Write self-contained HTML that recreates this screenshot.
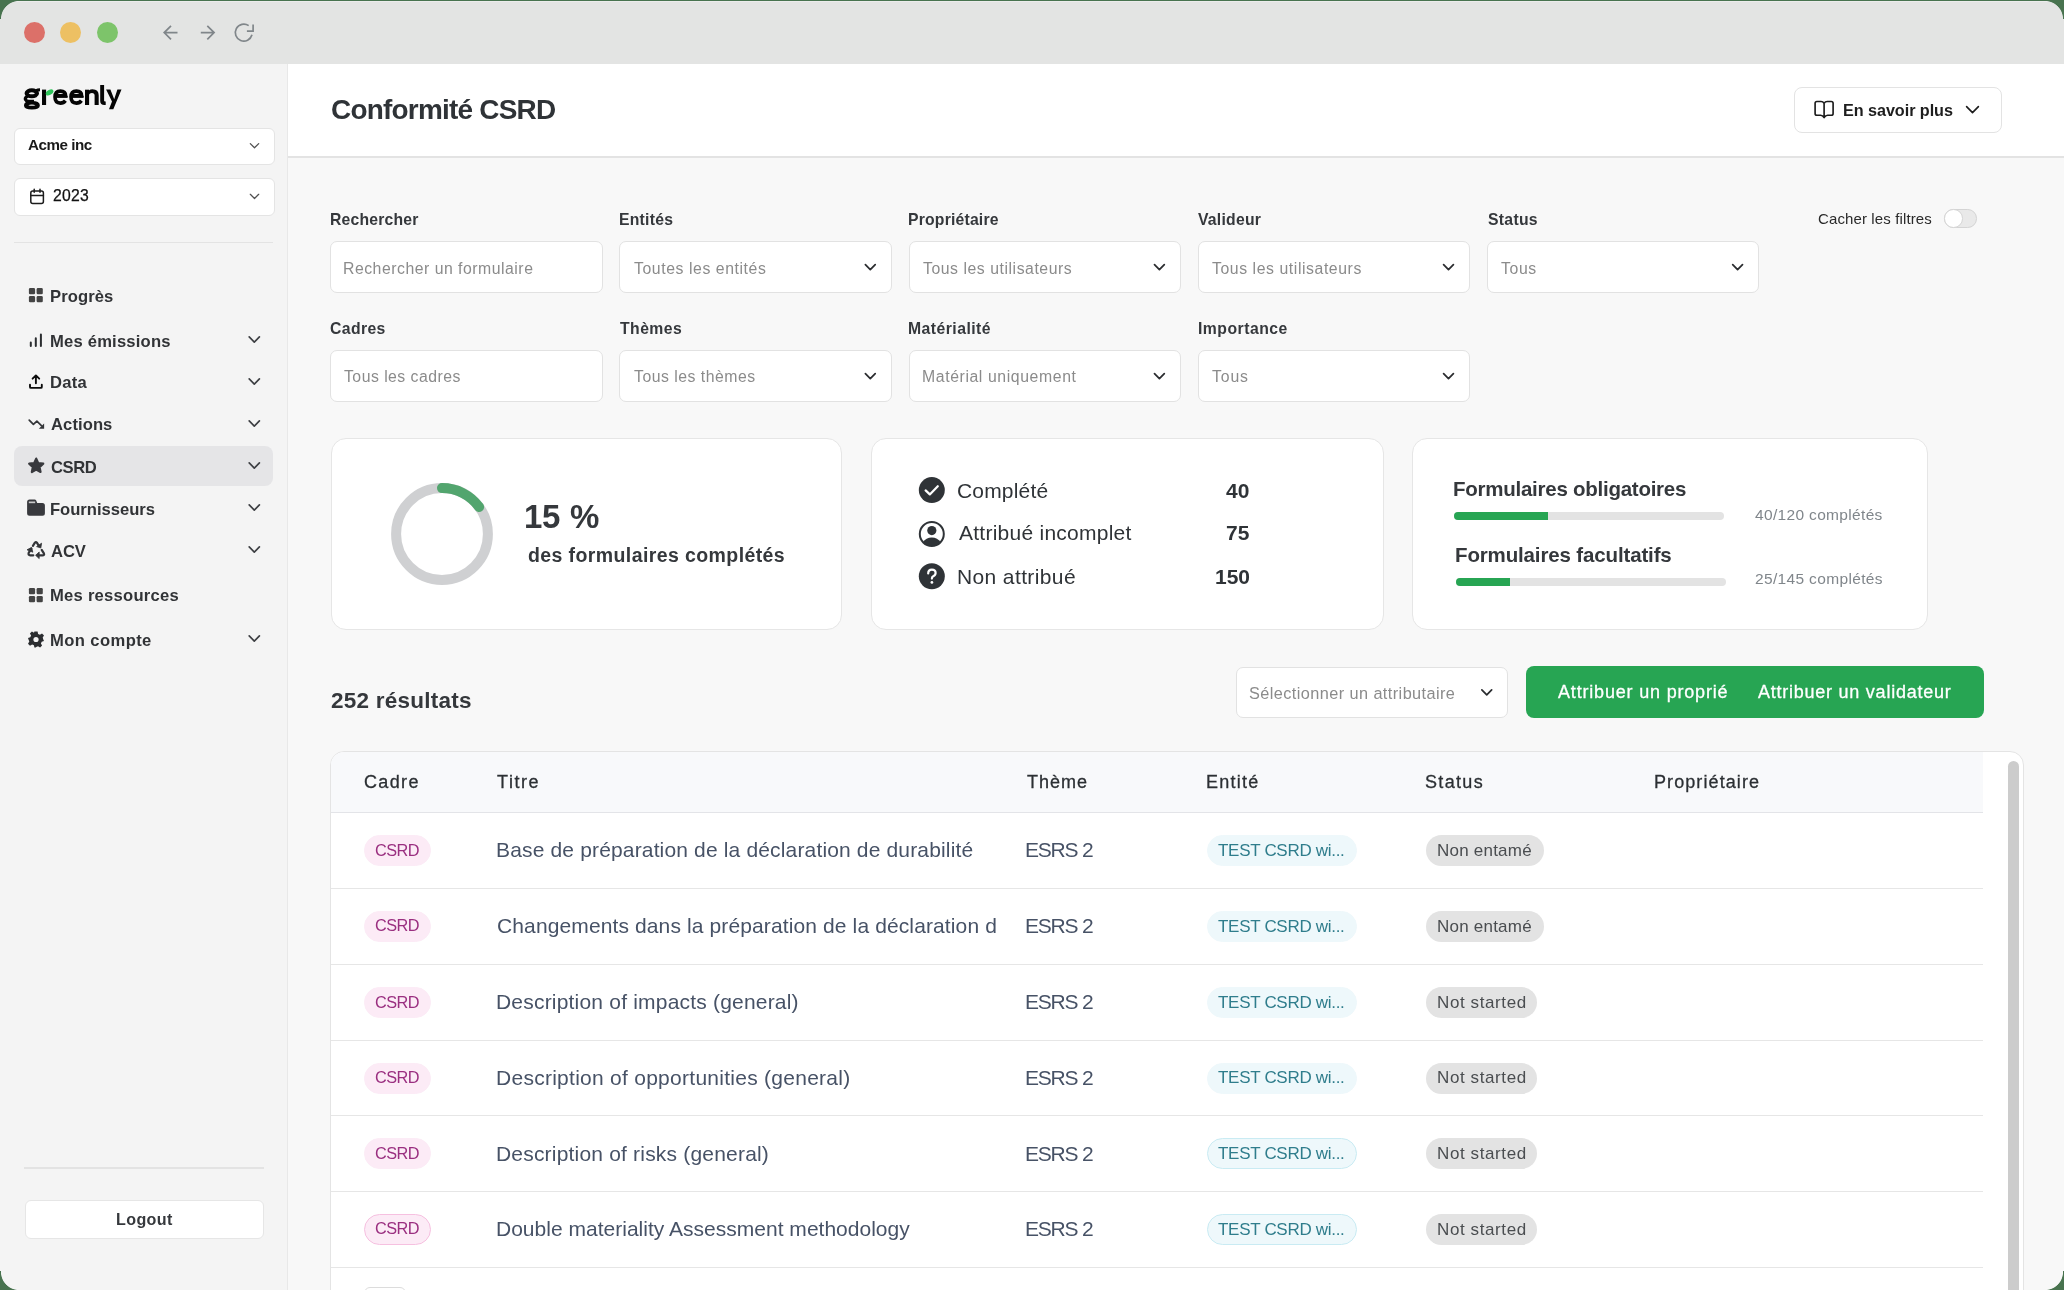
<!DOCTYPE html>
<html><head><meta charset="utf-8"><style>
html,body{margin:0;padding:0;}
body{width:2064px;height:1290px;overflow:hidden;background:#f8f8f8;position:relative;font-family:'Liberation Sans',sans-serif;}
#win{position:absolute;left:0;top:0;width:2064px;height:1290px;}
.a{position:absolute;box-sizing:border-box;}
.t{position:absolute;white-space:nowrap;font-family:'Liberation Sans',sans-serif;will-change:transform;}
svg{position:absolute;overflow:visible;}
.box{position:absolute;box-sizing:border-box;background:#fff;border:1px solid #e2e2e2;}
.chev{position:absolute;}

</style></head><body>
<!-- title bar -->
<div class="a" style="left:0;top:0;width:2064px;height:64px;background:#e3e4e3;"></div>
<div class="a" style="left:0;top:1px;width:2064px;height:1px;background:#ececec;"></div>
<div class="a" style="left:23.5px;top:21.9px;width:21px;height:21px;border-radius:50%;background:#dc7069;"></div>
<div class="a" style="left:60.4px;top:21.9px;width:21px;height:21px;border-radius:50%;background:#edc063;"></div>
<div class="a" style="left:97.1px;top:21.9px;width:21px;height:21px;border-radius:50%;background:#7dc46a;"></div>
<svg width="2064" height="64" style="left:0;top:0" fill="none" stroke="#80868a" stroke-width="1.7" stroke-linecap="butt">
  <path d="M177.5 32.6 H164.5 M171 25.8 L164.2 32.6 L171 39.4"/>
  <path d="M200.8 32.6 H213.8 M207.3 25.8 L214.1 32.6 L207.3 39.4"/>
  <path d="M252.01 34.8 A8.5 8.5 0 1 1 248.68 25.64"/>
  <path d="M253.1 24.6 V31.2 H246.9"/>
</svg>
<!-- sidebar -->
<div class="a" style="left:0;top:64px;width:287px;height:1226px;background:#f4f4f4;"></div>
<div class="a" style="left:287px;top:64px;width:1px;height:1226px;background:#e8e8e8;"></div>
<!-- main header -->
<div class="a" style="left:288px;top:64px;width:1776px;height:92px;background:#fff;"></div>
<div class="a" style="left:288px;top:156px;width:1776px;height:1.5px;background:#e3e3e3;"></div>
<!-- logo -->
<svg width="300" height="130" style="left:0;top:0">
 <g fill="none" stroke="#050505" stroke-linecap="butt">
  <ellipse cx="31.8" cy="93.3" rx="5.2" ry="3.0" stroke-width="4.1"/>
  <ellipse cx="31.9" cy="105.2" rx="6.1" ry="2.45" stroke-width="3.7"/>
  <path d="M27.6 96.2 Q23.6 98.6 26.4 100.6 Q27.8 101.4 31 101.4 H34" stroke-width="3.3"/>
  <path d="M36.4 90.6 Q37.6 89.8 40 89.8" stroke-width="3.0"/>
  <path d="M60.3 101.4 H60.3" stroke-width="0"/>
 </g>
 <rect x="42" y="89.6" width="4.1" height="15.4" fill="#050505"/>
 <ellipse cx="49.6" cy="92.4" rx="4.2" ry="2.4" transform="rotate(-32 49.6 92.4)" fill="#2ec55a"/>
 <g fill="none" stroke="#050505" stroke-width="3.6">
  <path d="M55.2 95.9 H65.6 Q65.6 91.1 60.4 91.1 Q55 91.1 55 97.1 Q55 103.1 60.4 103.1 Q63.6 103.1 65.4 100.6"/>
  <path d="M71.2 95.9 H81.6 Q81.6 91.1 76.4 91.1 Q71 91.1 71 97.1 Q71 103.1 76.4 103.1 Q79.6 103.1 81.4 100.6"/>
 </g>
 <path d="M55 95.8 V97.6 H67.6 V95.8 Z" fill="#050505"/>
 <path d="M71 95.8 V97.6 H83.6 V95.8 Z" fill="#050505"/>
 <rect x="85" y="89.7" width="4.1" height="15.3" fill="#050505"/>
 <path d="M87 94 Q88 89.2 92.5 89.2 Q98.7 89.2 98.7 95.2 V105 H94.6 V95.6 Q94.6 93 92 93 Q89 93 88.5 96 Z" fill="#050505"/>
 <path d="M100.2 85 H104.1 V100.8 Q104.1 101.6 105.7 101.4 V105 Q100.2 105.6 100.2 101 Z" fill="#050505"/>
 <path d="M106.1 89.6 H110.4 L114.2 99.2 L117.4 89.6 H121.5 L113.3 109.3 H109 L112 101.6 Z" fill="#050505"/>
</svg>

<!-- sidebar selects -->
<div class="box" style="left:13.5px;top:127.8px;width:261px;height:37.5px;border-radius:6px;border-color:#e4e4e4"></div>
<div class="box" style="left:13.5px;top:178.2px;width:261px;height:37.5px;border-radius:6px;border-color:#e4e4e4"></div>
<svg width="300" height="300" style="left:0;top:0" fill="none" stroke="#505050" stroke-width="1.25" stroke-linecap="round" stroke-linejoin="round">
  <path d="M250.3 143.6 L254.5 147.8 L258.7 143.6"/>
  <path d="M250.3 194.3 L254.5 198.5 L258.7 194.3"/>
</svg>
<svg width="300" height="300" style="left:0;top:0" fill="none" stroke="#1c1c1c" stroke-width="1.5" stroke-linecap="round" stroke-linejoin="round">
  <rect x="30.8" y="191" width="12.6" height="12.4" rx="2"/>
  <path d="M30.8 195.6 H43.4 M34.2 189.2 V192.2 M40 189.2 V192.2"/>
</svg>
<div class="a" style="left:14px;top:241.5px;width:259px;height:1.5px;background:#e3e3e3;"></div>
<!-- CSRD highlight -->
<div class="a" style="left:14.3px;top:445.6px;width:259px;height:40px;border-radius:8px;background:#e5e5e7;"></div>
<!-- nav icons -->
<svg width="300" height="700" style="left:0;top:0" fill="#444">
  <rect x="28.9" y="288.1" width="6.2" height="6.2" rx="1.3"/><rect x="36.6" y="288.1" width="6.2" height="6.2" rx="1.3"/>
  <rect x="28.9" y="296.1" width="6.2" height="6.2" rx="1.3"/><rect x="36.6" y="296.1" width="6.2" height="6.2" rx="1.3"/>
  <rect x="28.9" y="588" width="6.2" height="6.2" rx="1.3"/><rect x="36.6" y="588" width="6.2" height="6.2" rx="1.3"/>
  <rect x="28.9" y="596" width="6.2" height="6.2" rx="1.3"/><rect x="36.6" y="596" width="6.2" height="6.2" rx="1.3"/>
</svg>
<svg width="300" height="700" style="left:0;top:0" fill="none" stroke="#2b2d30" stroke-width="2" stroke-linecap="round" stroke-linejoin="round">
  <path d="M30.8 346 V342.6 M35.8 346 V338.2 M40.9 346 V334.4"/>
  <path d="M30 384.8 V387 Q30 387.9 30.9 387.9 H40.9 Q41.8 387.9 41.8 387 V384.8 M35.9 383.2 V375.8 M32.6 378.7 L35.9 375.4 L39.2 378.7" stroke="#0c0c0c" stroke-width="1.9"/>
  <path d="M29.2 420.1 L33.4 424.4 L36.9 421.1 L41.4 425.6" stroke-width="1.7" stroke="#333538"/><path d="M44.1 423.4 V428.7 H38.8 Z" fill="#333538" stroke="none"/>
</svg>
<svg width="300" height="700" style="left:0;top:0" fill="#2b2d30">
  <path d="M36.20 458.60 L38.26 463.17 L43.24 463.71 L39.53 467.08 L40.55 471.99 L36.20 469.50 L31.85 471.99 L32.87 467.08 L29.16 463.71 L34.14 463.17 Z" fill="#38393d" stroke="#38393d" stroke-width="2.2" stroke-linejoin="round"/>
  <path d="M27.1 502 Q27.1 499.5 29.6 499.5 H34.6 Q35.7 499.5 36.2 500.6 L37.2 503 H42.4 Q44.9 503 44.9 505.5 V513.2 Q44.9 515.7 42.4 515.7 H29.6 Q27.1 515.7 27.1 513.2 Z" fill="#38393d"/><rect x="28.8" y="501.5" width="6.4" height="1.7" fill="#c9c9ca"/>
  <!-- gear -->
  <g transform="translate(36 639.5)">
    <path d="M-1.6 -8 H1.6 L2.1 -5.6 L3.9 -4.7 L6 -6 L8 -4 L6.7 -1.9 L7.3 0 L8 1.6 V1.6 L5.7 2.2 L4.9 4 L6.1 6.1 L4.1 8.1 L2 6.8 L0.2 7.5 L-0.3 8 H-1.6 L-2.1 5.7 L-3.9 4.9 L-6 6.2 L-8 4.2 L-6.7 2.1 L-7.4 0.3 L-8 -1.6 L-5.7 -2.2 L-4.9 -4 L-6.1 -6.1 L-4.1 -8.1 L-2 -6.8 Z"/>
    <circle cx="0" cy="0" r="2.6" fill="#f4f4f4"/>
  </g>
</svg>
<!-- recycle icon ACV -->
<svg width="300" height="700" style="left:0;top:0" fill="none" stroke="#333538" stroke-width="2.2" stroke-linecap="round" stroke-linejoin="round">
  <path d="M32.9 545.8 L34.9 542.7 Q35.9 541.5 36.9 542.7 L38.2 544.8"/>
  <path d="M31.3 548.6 L28.7 552.9 Q27.9 555.3 30.3 555.3 H33.3"/>
  <path d="M41.7 549.9 L43.9 553.4 Q44.8 555.3 42.4 555.3 H37.6"/>
</svg>
<svg width="300" height="700" style="left:0;top:0" fill="#333538" stroke="#333538" stroke-width="0.8" stroke-linejoin="round">
  <path d="M41.6 543.2 L40.8 548 L36.6 546.6 Z"/>
  <path d="M27 549.8 L31.6 547.4 L32.8 552.2 Z"/>
  <path d="M39.2 552 L35.6 555.3 L39.2 558.6 Z"/>
</svg>
<!-- nav chevrons -->
<svg width="300" height="700" style="left:0;top:0" fill="none" stroke="#3c3e42" stroke-width="1.65" stroke-linecap="round" stroke-linejoin="round">
  <path d="M249.2 336.9 L254.3 342.1 L259.4 336.9"/>
  <path d="M249.2 378.9 L254.3 384.1 L259.4 378.9"/>
  <path d="M249.2 420.9 L254.3 426.1 L259.4 420.9"/>
  <path d="M249.2 462.9 L254.3 468.1 L259.4 462.9"/>
  <path d="M249.2 504.9 L254.3 510.1 L259.4 504.9"/>
  <path d="M249.2 546.9 L254.3 552.1 L259.4 546.9"/>
  <path d="M249.2 635.9 L254.3 641.1 L259.4 635.9"/>
</svg>
<!-- logout -->
<div class="a" style="left:24px;top:1167px;width:240px;height:1.5px;background:#e3e3e3;"></div>
<div class="box" style="left:24.5px;top:1200px;width:239px;height:38.5px;border-radius:6px;border-color:#e6e6e6"></div>
<!-- en savoir plus -->
<div class="box" style="left:1793.9px;top:87.0px;width:208px;height:45.8px;border-radius:8px;border-color:#e3e3e3"></div>
<svg width="2064" height="200" style="left:0;top:0" fill="none" stroke="#1c1c1c" stroke-width="1.6" stroke-linecap="round" stroke-linejoin="round">
  <path d="M1824.1 103.4 Q1823 101.5 1821 101.5 H1816.9 Q1815.1 101.5 1815.1 103.3 V113.4 Q1815.1 115.2 1816.9 115.2 H1820.6 Q1822.6 115.2 1824.1 117.6 Q1825.6 115.2 1827.6 115.2 H1831.3 Q1833.1 115.2 1833.1 113.4 V103.3 Q1833.1 101.5 1831.3 101.5 H1827.2 Q1825.2 101.5 1824.1 103.4 V117.6" stroke-width="1.65"/>
  <path d="M1966.6 106.6 L1972.5 112.6 L1978.4 106.6"/>
</svg>
<!-- filter boxes -->
<div class="box" style="left:330.3px;top:241.4px;width:272.4px;height:51.8px;border-radius:7px"></div>
<div class="box" style="left:619.4px;top:241.4px;width:272.4px;height:51.8px;border-radius:7px"></div>
<div class="box" style="left:908.5px;top:241.4px;width:272.4px;height:51.8px;border-radius:7px"></div>
<div class="box" style="left:1197.6px;top:241.4px;width:272.4px;height:51.8px;border-radius:7px"></div>
<div class="box" style="left:1486.7px;top:241.4px;width:272.4px;height:51.8px;border-radius:7px"></div>
<div class="box" style="left:330.3px;top:350.4px;width:272.4px;height:51.8px;border-radius:7px"></div>
<div class="box" style="left:619.4px;top:350.4px;width:272.4px;height:51.8px;border-radius:7px"></div>
<div class="box" style="left:908.5px;top:350.4px;width:272.4px;height:51.8px;border-radius:7px"></div>
<div class="box" style="left:1197.6px;top:350.4px;width:272.4px;height:51.8px;border-radius:7px"></div>
<svg width="2064" height="420" style="left:0;top:0" fill="none" stroke="#2a2c2f" stroke-width="1.75" stroke-linecap="round" stroke-linejoin="round">
  <path d="M865.4 264.7 L870.3 269.6 L875.2 264.7"/>
  <path d="M1154.5 264.7 L1159.4 269.6 L1164.3 264.7"/>
  <path d="M1443.6 264.7 L1448.5 269.6 L1453.4 264.7"/>
  <path d="M1732.7 264.7 L1737.6 269.6 L1742.5 264.7"/>
  <path d="M865.4 373.7 L870.3 378.6 L875.2 373.7"/>
  <path d="M1154.5 373.7 L1159.4 378.6 L1164.3 373.7"/>
  <path d="M1443.6 373.7 L1448.5 378.6 L1453.4 373.7"/>
</svg>
<!-- toggle -->
<div class="a" style="left:1944.2px;top:209.3px;width:33px;height:18.5px;border-radius:9.25px;background:#e9e9e9;border:1px solid #d4d4d4"></div>
<div class="a" style="left:1944.2px;top:209.3px;width:18.5px;height:18.5px;border-radius:50%;background:#fff;border:1px solid #d4d4d4"></div>
<!-- cards -->
<div class="box" style="left:330.5px;top:438.3px;width:511.5px;height:191.7px;border-radius:15px;border-color:#e6e6e6"></div>
<div class="box" style="left:870.6px;top:438.3px;width:513.6px;height:191.7px;border-radius:15px;border-color:#e6e6e6"></div>
<div class="box" style="left:1412px;top:438.3px;width:515.8px;height:191.7px;border-radius:15px;border-color:#e6e6e6"></div>
<svg width="2064" height="700" style="left:0;top:0" fill="none">
  <circle cx="442" cy="534" r="45.9" stroke="#cfd0d2" stroke-width="10"/>
  <path d="M 442 488.1 A 45.9 45.9 0 0 1 479.1 507" stroke="#52a56e" stroke-width="10" stroke-linecap="round"/>
</svg>
<!-- card 2 icons -->
<svg width="2064" height="700" style="left:0;top:0">
  <circle cx="931.8" cy="490.1" r="13" fill="#2f3337"/>
  <path d="M925.6 490.4 L929.8 494.4 L937.8 486.2" fill="none" stroke="#fff" stroke-width="2.2" stroke-linecap="round" stroke-linejoin="round"/>
  <circle cx="931.8" cy="534" r="12" fill="none" stroke="#2f3337" stroke-width="2"/>
  <circle cx="931.8" cy="530.6" r="4.6" fill="#2f3337"/>
  <path d="M922.9 542.2 Q926 537.4 931.8 537.4 Q937.6 537.4 940.7 542.2 Q937 546 931.8 546 Q926.6 546 922.9 542.2 Z" fill="#2f3337"/>
  <circle cx="931.8" cy="576.2" r="13" fill="#2f3337"/>
  <path d="M928.2 573.4 Q928.2 569.6 931.9 569.6 Q935.6 569.6 935.6 573 Q935.6 575.2 933.2 576.2 Q931.9 576.8 931.9 578.6" fill="none" stroke="#fff" stroke-width="2.2" stroke-linecap="round"/>
  <circle cx="931.9" cy="582.4" r="1.4" fill="#fff"/>
</svg>
<!-- progress bars -->
<div class="a" style="left:1454px;top:512.4px;width:270.3px;height:7.7px;border-radius:4px;background:#e3e3e3;"></div>
<div class="a" style="left:1454px;top:512.4px;width:94px;height:7.7px;border-radius:4px 0 0 4px;background:#27a553;"></div>
<div class="a" style="left:1455.7px;top:578.3px;width:270.3px;height:8px;border-radius:4px;background:#e3e3e3;"></div>
<div class="a" style="left:1455.7px;top:578.3px;width:54.3px;height:8px;border-radius:4px 0 0 4px;background:#27a553;"></div>
<!-- select attributaire + green button -->
<div class="box" style="left:1236.4px;top:666.7px;width:272.1px;height:51.7px;border-radius:7px"></div>
<svg width="2064" height="800" style="left:0;top:0" fill="none" stroke="#2a2c2f" stroke-width="1.75" stroke-linecap="round" stroke-linejoin="round">
  <path d="M1481.85 689.9 L1486.75 694.8 L1491.65 689.9"/>
</svg>
<div class="a" style="left:1526.1px;top:666.4px;width:458px;height:51.2px;border-radius:8px;background:#27a553;"></div>
<!-- table -->
<div class="a" style="left:330.3px;top:751.2px;width:1693.3px;height:600px;border-radius:14px;background:#fff;border:1px solid #e4e4e4;"></div>
<div class="a" style="left:331.3px;top:752.2px;width:1651.7px;height:60px;border-radius:13px 0 0 0;background:#f8f9fb;"></div>
<div class="a" style="left:331.3px;top:812px;width:1651.7px;height:1px;background:#e3e4e8;"></div>
<div class="a" style="left:331.3px;top:888px;width:1651.7px;height:1px;background:#e6e6e6;"></div>
<div class="a" style="left:331.3px;top:964px;width:1651.7px;height:1px;background:#e6e6e6;"></div>
<div class="a" style="left:331.3px;top:1040px;width:1651.7px;height:1px;background:#e6e6e6;"></div>
<div class="a" style="left:331.3px;top:1115px;width:1651.7px;height:1px;background:#e6e6e6;"></div>
<div class="a" style="left:331.3px;top:1191px;width:1651.7px;height:1px;background:#e6e6e6;"></div>
<div class="a" style="left:331.3px;top:1267px;width:1651.7px;height:1px;background:#e6e6e6;"></div>
<div class="a" style="left:2008px;top:760.9px;width:11px;height:600px;border-radius:5.5px;background:#cccccc;"></div>
<div class="a" style="left:364.2px;top:1286.9px;width:41.7px;height:30px;border-radius:6px;border:1px solid #dcdcdc;background:#fff"></div>
<!-- badges -->
<div class="a" style="left:364.2px;top:835.30px;width:66.8px;height:31.2px;border-radius:16px;background:#fcebf6;border:1px solid #fcebf6;"></div>
<div class="a" style="left:1206.6px;top:835.30px;width:150px;height:31.2px;border-radius:16px;background:#eef8fb;border:1px solid #eef8fb;"></div>
<div class="a" style="left:1426px;top:835.30px;width:117.8px;height:31.2px;border-radius:16px;background:#e3e3e3;"></div>
<div class="a" style="left:364.2px;top:911.05px;width:66.8px;height:31.2px;border-radius:16px;background:#fcebf6;border:1px solid #fcebf6;"></div>
<div class="a" style="left:1206.6px;top:911.05px;width:150px;height:31.2px;border-radius:16px;background:#eef8fb;border:1px solid #eef8fb;"></div>
<div class="a" style="left:1426px;top:911.05px;width:117.8px;height:31.2px;border-radius:16px;background:#e3e3e3;"></div>
<div class="a" style="left:364.2px;top:986.80px;width:66.8px;height:31.2px;border-radius:16px;background:#fcebf6;border:1px solid #fcebf6;"></div>
<div class="a" style="left:1206.6px;top:986.80px;width:150px;height:31.2px;border-radius:16px;background:#eef8fb;border:1px solid #eef8fb;"></div>
<div class="a" style="left:1426px;top:986.80px;width:111px;height:31.2px;border-radius:16px;background:#e3e3e3;"></div>
<div class="a" style="left:364.2px;top:1062.55px;width:66.8px;height:31.2px;border-radius:16px;background:#fcebf6;border:1px solid #fcebf6;"></div>
<div class="a" style="left:1206.6px;top:1062.55px;width:150px;height:31.2px;border-radius:16px;background:#eef8fb;border:1px solid #eef8fb;"></div>
<div class="a" style="left:1426px;top:1062.55px;width:111px;height:31.2px;border-radius:16px;background:#e3e3e3;"></div>
<div class="a" style="left:364.2px;top:1138.30px;width:66.8px;height:31.2px;border-radius:16px;background:#fcebf6;border:1px solid #fcebf6;"></div>
<div class="a" style="left:1206.6px;top:1138.30px;width:150px;height:31.2px;border-radius:16px;background:#eef8fb;border:1px solid #c9ebf3;"></div>
<div class="a" style="left:1426px;top:1138.30px;width:111px;height:31.2px;border-radius:16px;background:#e3e3e3;"></div>
<div class="a" style="left:364.2px;top:1214.05px;width:66.8px;height:31.2px;border-radius:16px;background:#fcebf6;border:1px solid #f6c0e0;"></div>
<div class="a" style="left:1206.6px;top:1214.05px;width:150px;height:31.2px;border-radius:16px;background:#eef8fb;border:1px solid #c9ebf3;"></div>
<div class="a" style="left:1426px;top:1214.05px;width:111px;height:31.2px;border-radius:16px;background:#e3e3e3;"></div>
<!-- window corners -->
<div class="a" style="left:0;top:0;width:2064px;height:1px;background:#48734f;z-index:10"></div>
<div class="a" style="left:0;top:0;width:19px;height:19px;background:radial-gradient(circle at 19px 19px, rgba(0,0,0,0) 17.6px, #48734f 18.4px);z-index:10"></div>
<div class="a" style="right:0;top:0;width:19px;height:19px;background:radial-gradient(circle at 0px 19px, rgba(0,0,0,0) 17.6px, #48734f 18.4px);z-index:10"></div>
<div class="a" style="left:0;bottom:0;width:19px;height:19px;background:radial-gradient(circle at 19px 1px, rgba(0,0,0,0) 17.6px, #48734f 18.4px);z-index:10"></div>
<div class="a" style="right:0;bottom:0;width:19px;height:19px;background:radial-gradient(circle at 0px 1px, rgba(0,0,0,0) 17.6px, #48734f 18.4px);z-index:10"></div>

<div class="t" id="t0" style="left:28.30px;top:137.08px;font-size:15.2px;line-height:15.2px;font-weight:700;color:#1a1a1a;letter-spacing:-0.481px;">Acme inc</div>
<div class="t" id="t1" style="left:53.27px;top:187.81px;font-size:15.75px;line-height:15.75px;font-weight:400;color:#111111;-webkit-text-stroke:0.25px #111111;letter-spacing:0.258px;">2023</div>
<div class="t" id="t2" style="left:50.19px;top:289.39px;font-size:16.6px;line-height:16.6px;font-weight:700;color:#313336;letter-spacing:0.082px;">Progrès</div>
<div class="t" id="t3" style="left:50.19px;top:333.59px;font-size:16.6px;line-height:16.6px;font-weight:700;color:#313336;letter-spacing:0.205px;">Mes émissions</div>
<div class="t" id="t4" style="left:50.19px;top:375.39px;font-size:16.6px;line-height:16.6px;font-weight:700;color:#313336;letter-spacing:0.228px;">Data</div>
<div class="t" id="t5" style="left:51.35px;top:417.39px;font-size:16.6px;line-height:16.6px;font-weight:700;color:#313336;letter-spacing:0.082px;">Actions</div>
<div class="t" id="t6" style="left:50.66px;top:459.89px;font-size:16.6px;line-height:16.6px;font-weight:700;color:#313336;letter-spacing:-0.405px;">CSRD</div>
<div class="t" id="t7" style="left:50.19px;top:501.89px;font-size:16.6px;line-height:16.6px;font-weight:700;color:#313336;letter-spacing:-0.016px;">Fournisseurs</div>
<div class="t" id="t8" style="left:51.35px;top:543.89px;font-size:16.6px;line-height:16.6px;font-weight:700;color:#313336;letter-spacing:-0.058px;">ACV</div>
<div class="t" id="t9" style="left:50.19px;top:588.39px;font-size:16.6px;line-height:16.6px;font-weight:700;color:#313336;letter-spacing:0.253px;">Mes ressources</div>
<div class="t" id="t10" style="left:50.19px;top:633.39px;font-size:16.6px;line-height:16.6px;font-weight:700;color:#313336;letter-spacing:0.402px;">Mon compte</div>
<div class="t" id="t11" style="left:115.86px;top:1210.56px;font-size:16.1px;line-height:16.1px;font-weight:700;color:#35383c;letter-spacing:0.373px;">Logout</div>
<div class="t" id="t12" style="left:330.71px;top:95.74px;font-size:27.95px;line-height:27.95px;font-weight:700;color:#2f3337;letter-spacing:-0.772px;">Conformité CSRD</div>
<div class="t" id="t13" style="left:1843.05px;top:102.08px;font-size:16.2px;line-height:16.2px;font-weight:700;color:#1e1e1e;letter-spacing:-0.056px;">En savoir plus</div>
<div class="t" id="t14" style="left:330.17px;top:211.86px;font-size:15.75px;line-height:15.75px;font-weight:700;color:#35383c;letter-spacing:0.188px;">Rechercher</div>
<div class="t" id="t15" style="left:619.32px;top:211.86px;font-size:15.75px;line-height:15.75px;font-weight:700;color:#35383c;letter-spacing:0.237px;">Entités</div>
<div class="t" id="t16" style="left:908.32px;top:211.86px;font-size:15.75px;line-height:15.75px;font-weight:700;color:#35383c;letter-spacing:0.190px;">Propriétaire</div>
<div class="t" id="t17" style="left:1197.88px;top:211.86px;font-size:15.75px;line-height:15.75px;font-weight:700;color:#35383c;letter-spacing:0.228px;">Valideur</div>
<div class="t" id="t18" style="left:1487.62px;top:211.86px;font-size:15.75px;line-height:15.75px;font-weight:700;color:#35383c;letter-spacing:0.295px;">Status</div>
<div class="t" id="t19" style="left:330.20px;top:321.11px;font-size:15.75px;line-height:15.75px;font-weight:700;color:#35383c;letter-spacing:0.391px;">Cadres</div>
<div class="t" id="t20" style="left:619.79px;top:321.11px;font-size:15.75px;line-height:15.75px;font-weight:700;color:#35383c;letter-spacing:0.450px;">Thèmes</div>
<div class="t" id="t21" style="left:908.32px;top:321.11px;font-size:15.75px;line-height:15.75px;font-weight:700;color:#35383c;letter-spacing:0.461px;">Matérialité</div>
<div class="t" id="t22" style="left:1197.80px;top:321.11px;font-size:15.75px;line-height:15.75px;font-weight:700;color:#35383c;letter-spacing:0.492px;">Importance</div>
<div class="t" id="t23" style="left:342.80px;top:260.57px;font-size:15.8px;line-height:15.8px;font-weight:400;color:#8b8b8b;letter-spacing:0.508px;">Rechercher un formulaire</div>
<div class="t" id="t24" style="left:633.56px;top:260.57px;font-size:15.8px;line-height:15.8px;font-weight:400;color:#8b8b8b;letter-spacing:0.574px;">Toutes les entités</div>
<div class="t" id="t25" style="left:922.56px;top:260.57px;font-size:15.8px;line-height:15.8px;font-weight:400;color:#8b8b8b;letter-spacing:0.542px;">Tous les utilisateurs</div>
<div class="t" id="t26" style="left:1211.56px;top:260.57px;font-size:15.8px;line-height:15.8px;font-weight:400;color:#8b8b8b;letter-spacing:0.572px;">Tous les utilisateurs</div>
<div class="t" id="t27" style="left:1501.06px;top:260.57px;font-size:15.8px;line-height:15.8px;font-weight:400;color:#8b8b8b;letter-spacing:0.624px;">Tous</div>
<div class="t" id="t28" style="left:343.56px;top:368.57px;font-size:15.8px;line-height:15.8px;font-weight:400;color:#8b8b8b;letter-spacing:0.474px;">Tous les cadres</div>
<div class="t" id="t29" style="left:633.56px;top:368.57px;font-size:15.8px;line-height:15.8px;font-weight:400;color:#8b8b8b;letter-spacing:0.502px;">Tous les thèmes</div>
<div class="t" id="t30" style="left:921.80px;top:368.57px;font-size:15.8px;line-height:15.8px;font-weight:400;color:#8b8b8b;letter-spacing:0.600px;">Matérial uniquement</div>
<div class="t" id="t31" style="left:1211.56px;top:368.57px;font-size:15.8px;line-height:15.8px;font-weight:400;color:#8b8b8b;letter-spacing:0.878px;">Tous</div>
<div class="t" id="t32" style="left:1817.75px;top:210.75px;font-size:15.0px;line-height:15.0px;font-weight:400;color:#2a2a2a;letter-spacing:0.120px;">Cacher les filtres</div>
<div class="t" id="t33" style="left:523.64px;top:500.15px;font-size:33px;line-height:33px;font-weight:700;color:#35383c;letter-spacing:-0.475px;">15</div>
<div class="t" id="t34" style="left:570.02px;top:500.15px;font-size:33px;line-height:33px;font-weight:700;color:#35383c;letter-spacing:0.000px;">%</div>
<div class="t" id="t35" style="left:527.52px;top:545.93px;font-size:19.5px;line-height:19.5px;font-weight:700;color:#35383c;letter-spacing:0.401px;">des formulaires complétés</div>
<div class="t" id="t36" style="left:957.41px;top:479.95px;font-size:21.0px;line-height:21.0px;font-weight:400;color:#2f3337;letter-spacing:0.169px;">Complété</div>
<div class="t" id="t37" style="left:958.84px;top:522.15px;font-size:21.0px;line-height:21.0px;font-weight:400;color:#2f3337;letter-spacing:0.253px;">Attribué incomplet</div>
<div class="t" id="t38" style="left:957.05px;top:566.15px;font-size:21.0px;line-height:21.0px;font-weight:400;color:#2f3337;letter-spacing:0.378px;">Non attribué</div>
<div class="t" id="t39" style="right:814.38px;top:479.95px;font-size:21.0px;line-height:21.0px;font-weight:700;color:#2f3337;letter-spacing:0.000px;">40</div>
<div class="t" id="t40" style="right:814.41px;top:522.15px;font-size:21.0px;line-height:21.0px;font-weight:700;color:#2f3337;letter-spacing:0.000px;">75</div>
<div class="t" id="t41" style="right:814.34px;top:566.15px;font-size:21.0px;line-height:21.0px;font-weight:700;color:#2f3337;letter-spacing:0.000px;">150</div>
<div class="t" id="t42" style="left:1453.42px;top:479.37px;font-size:20.5px;line-height:20.5px;font-weight:700;color:#35383c;letter-spacing:-0.255px;">Formulaires obligatoires</div>
<div class="t" id="t43" style="left:1754.88px;top:507.08px;font-size:15.5px;line-height:15.5px;font-weight:400;color:#80868b;letter-spacing:0.334px;">40/120 complétés</div>
<div class="t" id="t44" style="left:1454.72px;top:545.38px;font-size:20.5px;line-height:20.5px;font-weight:700;color:#35383c;letter-spacing:-0.143px;">Formulaires facultatifs</div>
<div class="t" id="t45" style="left:1754.95px;top:571.08px;font-size:15.5px;line-height:15.5px;font-weight:400;color:#80868b;letter-spacing:0.342px;">25/145 complétés</div>
<div class="t" id="t46" style="left:330.73px;top:690.37px;font-size:22.5px;line-height:22.5px;font-weight:700;color:#35383c;letter-spacing:0.238px;">252 résultats</div>
<div class="t" id="t47" style="left:1248.84px;top:685.14px;font-size:16.3px;line-height:16.3px;font-weight:400;color:#8b8b8b;letter-spacing:0.420px;">Sélectionner un attributaire</div>
<div class="t" id="t48" style="left:1557.97px;top:683.05px;font-size:18px;line-height:18px;font-weight:400;color:#ffffff;-webkit-text-stroke:0.29px #ffffff;letter-spacing:0.814px;">Attribuer un proprié</div>
<div class="t" id="t49" style="left:1757.87px;top:683.05px;font-size:18px;line-height:18px;font-weight:400;color:#ffffff;-webkit-text-stroke:0.29px #ffffff;letter-spacing:0.755px;">Attribuer un validateur</div>
<div class="t" id="t50" style="left:363.79px;top:773.10px;font-size:18px;line-height:18px;font-weight:400;color:#2b2f33;-webkit-text-stroke:0.29px #2b2f33;letter-spacing:1.360px;">Cadre</div>
<div class="t" id="t51" style="left:496.90px;top:773.10px;font-size:18px;line-height:18px;font-weight:400;color:#2b2f33;-webkit-text-stroke:0.29px #2b2f33;letter-spacing:1.556px;">Titre</div>
<div class="t" id="t52" style="left:1026.90px;top:773.10px;font-size:18px;line-height:18px;font-weight:400;color:#2b2f33;-webkit-text-stroke:0.29px #2b2f33;letter-spacing:0.996px;">Thème</div>
<div class="t" id="t53" style="left:1206.18px;top:773.10px;font-size:18px;line-height:18px;font-weight:400;color:#2b2f33;-webkit-text-stroke:0.29px #2b2f33;letter-spacing:1.264px;">Entité</div>
<div class="t" id="t54" style="left:1425.37px;top:773.10px;font-size:18px;line-height:18px;font-weight:400;color:#2b2f33;-webkit-text-stroke:0.29px #2b2f33;letter-spacing:1.335px;">Status</div>
<div class="t" id="t55" style="left:1653.68px;top:773.10px;font-size:18px;line-height:18px;font-weight:400;color:#2b2f33;-webkit-text-stroke:0.29px #2b2f33;letter-spacing:1.086px;">Propriétaire</div>
<div class="t" id="t56" style="left:496.30px;top:839.45px;font-size:21.0px;line-height:21.0px;font-weight:400;color:#475266;letter-spacing:0.157px;">Base de préparation de la déclaration de durabilité</div>
<div class="t" id="t57" style="left:1025.35px;top:839.45px;font-size:21.0px;line-height:21.0px;font-weight:400;color:#475266;letter-spacing:-1.224px;">ESRS 2</div>
<div class="t" id="t58" style="left:374.62px;top:841.50px;font-size:16.3px;line-height:16.3px;font-weight:400;color:#9a2f80;letter-spacing:-0.523px;">CSRD</div>
<div class="t" id="t59" style="left:1218.43px;top:841.90px;font-size:17.0px;line-height:17.0px;font-weight:400;color:#2f7d8c;letter-spacing:-0.297px;">TEST CSRD wi...</div>
<div class="t" id="t60" style="left:1437.11px;top:841.90px;font-size:17.0px;line-height:17.0px;font-weight:400;color:#4a4d50;letter-spacing:0.223px;">Non entamé</div>
<div class="t" id="t61" style="left:496.66px;top:915.45px;font-size:21.0px;line-height:21.0px;font-weight:400;color:#475266;letter-spacing:0.120px;">Changements dans la préparation de la déclaration d</div>
<div class="t" id="t62" style="left:1025.35px;top:915.45px;font-size:21.0px;line-height:21.0px;font-weight:400;color:#475266;letter-spacing:-1.224px;">ESRS 2</div>
<div class="t" id="t63" style="left:374.62px;top:917.49px;font-size:16.3px;line-height:16.3px;font-weight:400;color:#9a2f80;letter-spacing:-0.523px;">CSRD</div>
<div class="t" id="t64" style="left:1218.43px;top:917.90px;font-size:17.0px;line-height:17.0px;font-weight:400;color:#2f7d8c;letter-spacing:-0.297px;">TEST CSRD wi...</div>
<div class="t" id="t65" style="left:1437.11px;top:917.90px;font-size:17.0px;line-height:17.0px;font-weight:400;color:#4a4d50;letter-spacing:0.223px;">Non entamé</div>
<div class="t" id="t66" style="left:496.30px;top:991.45px;font-size:21.0px;line-height:21.0px;font-weight:400;color:#475266;letter-spacing:0.198px;">Description of impacts (general)</div>
<div class="t" id="t67" style="left:1025.35px;top:991.45px;font-size:21.0px;line-height:21.0px;font-weight:400;color:#475266;letter-spacing:-1.224px;">ESRS 2</div>
<div class="t" id="t68" style="left:374.62px;top:993.50px;font-size:16.3px;line-height:16.3px;font-weight:400;color:#9a2f80;letter-spacing:-0.523px;">CSRD</div>
<div class="t" id="t69" style="left:1218.43px;top:993.90px;font-size:17.0px;line-height:17.0px;font-weight:400;color:#2f7d8c;letter-spacing:-0.297px;">TEST CSRD wi...</div>
<div class="t" id="t70" style="left:1437.11px;top:993.90px;font-size:17.0px;line-height:17.0px;font-weight:400;color:#4a4d50;letter-spacing:0.607px;">Not started</div>
<div class="t" id="t71" style="left:496.30px;top:1067.45px;font-size:21.0px;line-height:21.0px;font-weight:400;color:#475266;letter-spacing:0.267px;">Description of opportunities (general)</div>
<div class="t" id="t72" style="left:1025.35px;top:1067.45px;font-size:21.0px;line-height:21.0px;font-weight:400;color:#475266;letter-spacing:-1.224px;">ESRS 2</div>
<div class="t" id="t73" style="left:374.62px;top:1069.49px;font-size:16.3px;line-height:16.3px;font-weight:400;color:#9a2f80;letter-spacing:-0.523px;">CSRD</div>
<div class="t" id="t74" style="left:1218.43px;top:1068.90px;font-size:17.0px;line-height:17.0px;font-weight:400;color:#2f7d8c;letter-spacing:-0.297px;">TEST CSRD wi...</div>
<div class="t" id="t75" style="left:1437.11px;top:1068.90px;font-size:17.0px;line-height:17.0px;font-weight:400;color:#4a4d50;letter-spacing:0.607px;">Not started</div>
<div class="t" id="t76" style="left:496.30px;top:1143.45px;font-size:21.0px;line-height:21.0px;font-weight:400;color:#475266;letter-spacing:0.193px;">Description of risks (general)</div>
<div class="t" id="t77" style="left:1025.35px;top:1143.45px;font-size:21.0px;line-height:21.0px;font-weight:400;color:#475266;letter-spacing:-1.224px;">ESRS 2</div>
<div class="t" id="t78" style="left:374.62px;top:1145.49px;font-size:16.3px;line-height:16.3px;font-weight:400;color:#9a2f80;letter-spacing:-0.523px;">CSRD</div>
<div class="t" id="t79" style="left:1218.43px;top:1144.90px;font-size:17.0px;line-height:17.0px;font-weight:400;color:#2f7d8c;letter-spacing:-0.297px;">TEST CSRD wi...</div>
<div class="t" id="t80" style="left:1437.11px;top:1144.90px;font-size:17.0px;line-height:17.0px;font-weight:400;color:#4a4d50;letter-spacing:0.607px;">Not started</div>
<div class="t" id="t81" style="left:496.30px;top:1218.45px;font-size:21.0px;line-height:21.0px;font-weight:400;color:#475266;letter-spacing:0.014px;">Double materiality Assessment methodology</div>
<div class="t" id="t82" style="left:1025.35px;top:1218.45px;font-size:21.0px;line-height:21.0px;font-weight:400;color:#475266;letter-spacing:-1.224px;">ESRS 2</div>
<div class="t" id="t83" style="left:374.62px;top:1220.49px;font-size:16.3px;line-height:16.3px;font-weight:400;color:#9a2f80;letter-spacing:-0.523px;">CSRD</div>
<div class="t" id="t84" style="left:1218.43px;top:1220.90px;font-size:17.0px;line-height:17.0px;font-weight:400;color:#2f7d8c;letter-spacing:-0.297px;">TEST CSRD wi...</div>
<div class="t" id="t85" style="left:1437.11px;top:1220.90px;font-size:17.0px;line-height:17.0px;font-weight:400;color:#4a4d50;letter-spacing:0.607px;">Not started</div>
</body></html>
